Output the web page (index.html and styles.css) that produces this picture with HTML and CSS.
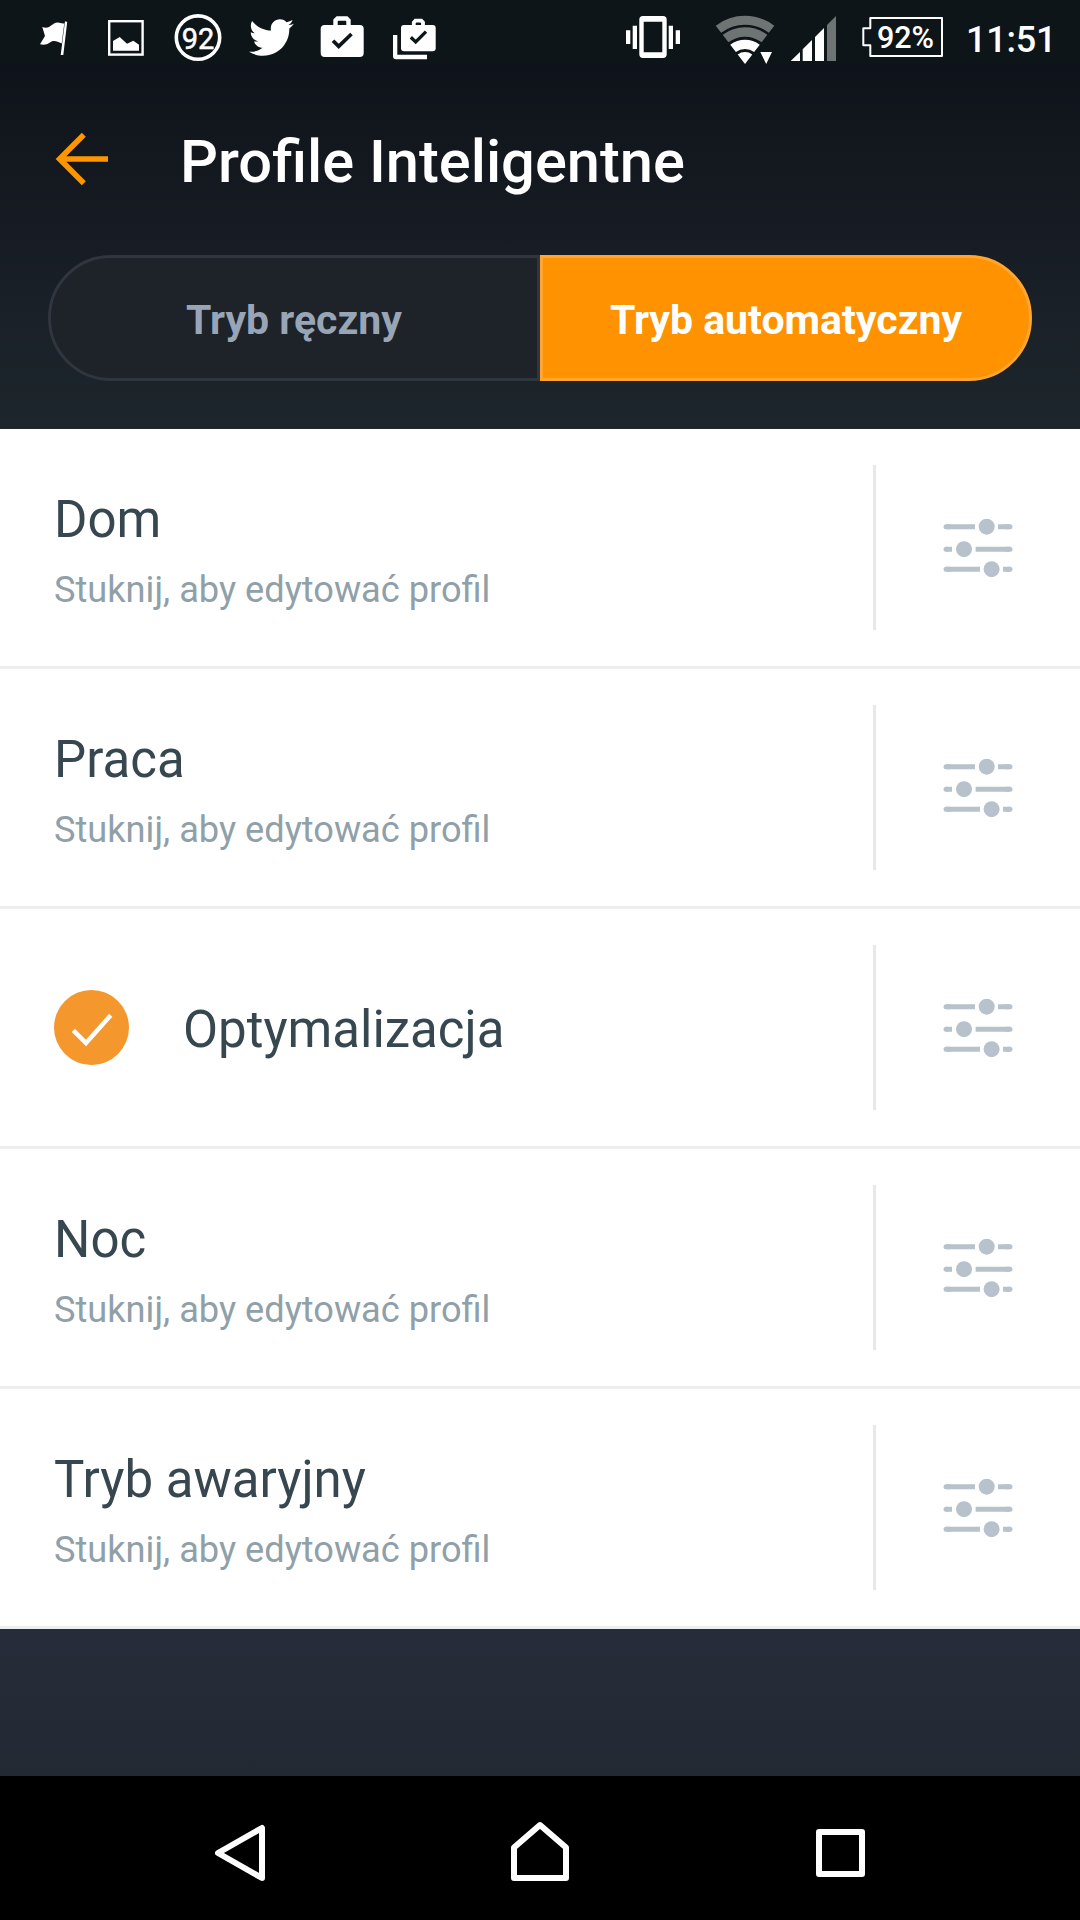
FILE: index.html
```html
<!DOCTYPE html>
<html lang="pl">
<head>
<meta charset="utf-8">
<title>Profile Inteligentne</title>
<link rel="stylesheet" href="styles.css">
</head>
<body>
<svg class="defs" aria-hidden="true">
  <symbol id="sliders" viewBox="943 517 70 61">
    <g fill="none" stroke="#b8c2cc" stroke-width="5">
      <path d="M946 526.7H975M998 526.7H1010M946 549.3H952M975.6 549.3H1010M946 569.3H980M1003 569.3H1010"/>
      <path stroke-linecap="round" d="M946 526.7h4M1006 526.7h4M946 549.3h1M1006 549.3h4M946 569.3h4M1008 569.3h2"/>
    </g>
    <g fill="#b8c2cc"><circle cx="986.7" cy="526.7" r="8"/><circle cx="964" cy="549.2" r="8"/><circle cx="991.6" cy="569.2" r="8"/></g>
  </symbol>
</svg>
<div class="screen">
  <header class="top">
    <div class="status">
      <svg width="72" height="75" viewBox="18 0 72 75" fill="#fff"><path d="M65 21.3l2.2.6L63.3 55h-2.6zM42.3 27C50 30 52 22.500 57.500 22.500c3 0 4.500 1.500 6.800.8L61.700 43.500C57 41.500 54 39.500 50 42.500c-3.500 2.300-6 2.500-10 1.800l5-8.300z"/></svg>
      <svg width="72" height="75" viewBox="90 0 72 75"><rect x="109.200" y="21.200" width="33.400" height="33.400" fill="none" stroke="#fff" stroke-width="2.400"/><path fill="#fff" d="M113 50.700V41l6.700-4 7.300 6.700 6.300-3 5.700 4v6z"/></svg>
      <svg width="72" height="75" viewBox="162 0 72 75"><circle cx="198" cy="37.600" r="21.700" fill="none" stroke="#fff" stroke-width="3.600"/><text class="badge-text" x="198" y="48.700" text-anchor="middle">92</text></svg>
      <svg width="72" height="75" viewBox="234 0 72 75" fill="#fff"><path transform="translate(249 15.100) scale(1.870)" d="M23.954 4.569c-.885.389-1.83.654-2.825.775 1.014-.611 1.794-1.574 2.163-2.723-.951.555-2.005.959-3.127 1.184-.896-.959-2.173-1.559-3.591-1.559-2.717 0-4.920 2.203-4.920 4.917 0 .39.045.765.127 1.124C7.691 8.094 4.066 6.130 1.640 3.161c-.427.722-.666 1.561-.666 2.475 0 1.710.87 3.213 2.188 4.096-.807-.026-1.566-.248-2.228-.616v.061c0 2.385 1.693 4.374 3.946 4.827-.413.111-.849.171-1.296.171-.314 0-.615-.03-.916-.086.631 1.953 2.445 3.377 4.604 3.417-1.680 1.319-3.809 2.105-6.102 2.105-.39 0-.779-.023-1.170-.067 2.189 1.394 4.768 2.209 7.557 2.209 9.054 0 13.999-7.496 13.999-13.986 0-.209 0-.42-.015-.63.961-.689 1.800-1.560 2.460-2.548z"/></svg>
      <svg width="72" height="75" viewBox="306 0 72 75"><rect x="320.700" y="25" width="43" height="32" rx="4" fill="#fff"/><path fill="none" stroke="#fff" stroke-width="4.400" d="M335.500 27V20.500L337.500 18.500H346.500L348.500 20.500V27"/><path fill="none" stroke="#0d1518" stroke-width="3.700" d="M333 40.700L338.700 46.300 351.500 34"/></svg>
      <svg width="72" height="75" viewBox="378 0 72 75"><rect x="401" y="25" width="34.700" height="26.300" rx="3" fill="#fff"/><path fill="none" stroke="#fff" stroke-width="3.800" d="M413.800 27V22.500L415.500 20.700H421.300L423 22.500V27"/><path fill="none" stroke="#0d1518" stroke-width="3.300" d="M410.800 37.300L415.700 42 426 31.700"/><path fill="#fff" d="M393 35h4.300v19.700H427v4.600H396q-3 0-3-3z"/></svg>
      <svg class="status-right" width="100" height="75" viewBox="600 0 100 75" fill="#fff"><path fill-rule="evenodd" d="M643 16h20q3.700 0 3.700 3.700V54.300q0 3.700-3.700 3.700H643q-3.700 0-3.700-3.700V19.700q0-3.700 3.700-3.700zM643.700 21.700V52.300H662.300V21.700z"/><path d="M632.700 25.700h4.300V49h-4.300zM626 30.300h4.300V44H626zM668.700 25.700h4.300V49h-4.300zM675.700 30.300h4.300V44h-4.300z"/></svg>
      <svg width="80" height="75" viewBox="700 0 80 75"><g fill="none" stroke="#6e7374"><path stroke-width="8.900" d="M718.420 29.260A43.750 43.750 0 0 1 771.580 29.260"/><path stroke-width="9.400" d="M725.560 38.590A32 32 0 0 1 764.440 38.590"/></g><path fill="none" stroke="#fff" stroke-width="9.300" d="M733.060 48.400A19.650 19.650 0 0 1 756.940 48.400"/><path fill="#fff" d="M745 64L737.700 54.500A12 12 0 0 1 752.300 54.500zM760.300 52H772L766.200 64z"/></svg>
      <svg width="70" height="75" viewBox="780 0 70 75" fill="#fff"><path d="M790.700 61L800 52V61zM802.700 61V49.300L812 40V61zM815 61V37L824 28V61z"/><path fill="#6e7374" d="M827 61V25L836 16V61z"/></svg>
      <svg width="100" height="75" viewBox="850 0 100 75"><path fill="none" stroke="#fff" stroke-width="2" stroke-linejoin="round" d="M870.300 18H942V56H870.300V45.300H863.300V28.300H870.300z"/><text class="battery-text" x="905.500" y="47.700" text-anchor="middle">92%</text></svg>
      <time class="clock">11:51</time>
    </div>
    <div class="titlebar">
      <svg class="back" width="60" height="60" viewBox="52 129 60 60" fill="none" stroke="#ff9500" stroke-width="5.600"><path d="M108 159H60M83.800 134.800L59.600 159 83.800 183.200"/></svg>
      <h1 class="title">Profile Inteligentne</h1>
    </div>
    <nav class="tabs">
      <div class="tab">Tryb ręczny</div>
      <div class="tab tab-active">Tryb automatyczny</div>
    </nav>
  </header>
  <main class="list">
    <section class="row">
      <div class="info"><div class="name">Dom</div><div class="hint">Stuknij, aby edytować profil</div></div>
      <div class="settings"><svg width="70" height="61"><use href="#sliders"/></svg></div>
    </section>
    <section class="row">
      <div class="info"><div class="name">Praca</div><div class="hint">Stuknij, aby edytować profil</div></div>
      <div class="settings"><svg width="70" height="61"><use href="#sliders"/></svg></div>
    </section>
    <section class="row">
      <div class="info info-selected">
        <svg class="check" width="75" height="75" viewBox="0 0 75 75"><circle cx="37.500" cy="37.500" r="37.500" fill="#f4972d"/><path fill="none" stroke="#fff" stroke-width="4.500" d="M19.300 40.300L32 53 56.700 25.300"/></svg>
        <div class="name">Optymalizacja</div>
      </div>
      <div class="settings"><svg width="70" height="61"><use href="#sliders"/></svg></div>
    </section>
    <section class="row">
      <div class="info"><div class="name">Noc</div><div class="hint">Stuknij, aby edytować profil</div></div>
      <div class="settings"><svg width="70" height="61"><use href="#sliders"/></svg></div>
    </section>
    <section class="row">
      <div class="info"><div class="name">Tryb awaryjny</div><div class="hint">Stuknij, aby edytować profil</div></div>
      <div class="settings"><svg width="70" height="61"><use href="#sliders"/></svg></div>
    </section>
  </main>
  <footer class="navbar">
    <svg width="300" height="144" viewBox="90 1776 300 144"><path d="M218 1853L262 1828V1878z"/></svg>
    <svg width="300" height="144" viewBox="390 1776 300 144"><path d="M514 1847.500L540 1825 566 1847.500V1878H514z"/></svg>
    <svg width="300" height="144" viewBox="690 1776 300 144"><path d="M819 1832H862V1874H819z"/></svg>
  </footer>
</div>
</body>
</html>
```

FILE: styles.css
```css
* { box-sizing: border-box; }
body { margin: 0; font-family: Roboto, "Noto Sans", sans-serif; }
svg { display: block; flex: none; }
.defs { display: none; }

.screen {
  display: flex;
  flex-direction: column;
  width: 1080px;
  height: 1920px;
  background: linear-gradient(#262c39 1629px, #222933 1776px);
}

.top {
  height: 429px;
  background: linear-gradient(#0d1518 0, #0d1518 64px, #0e131b 65px, #13171e 150px, #171c24 240px, #1a2128 320px, #1d262c 429px);
}
.status { display: flex; height: 75px; padding-left: 18px; color: #fff; }
.status-right { margin-left: 150px; }
.badge-text { font-size: 29px; fill: #fff; stroke: #fff; stroke-width: 0.5px; }
.battery-text { font-size: 30.500px; font-weight: 500; fill: #fff; }
.clock { padding-left: 16px; font-size: 36px; font-weight: 500; letter-spacing: -0.2px; line-height: 80px; }

.titlebar { display: flex; align-items: center; height: 180px; padding: 0 52px 12px; }
.title {
  margin: 5px 0 0 68px;
  color: #fff;
  font-size: 59.600px;
  font-weight: 500;
  line-height: 72px;
}

.tabs { display: flex; width: 984px; height: 126px; margin: 0 auto; }
.tab {
  flex: 1;
  padding-top: 4px;
  border: 3px solid #31353f;
  border-radius: 63px 0 0 63px;
  background: #1e2229;
  color: #97a5b6;
  font-size: 41px;
  font-weight: 700;
  line-height: 117px;
  text-align: center;
}
.tab-active { border-color: #ffa530; border-radius: 0 63px 63px 0; background: #ff9200; color: #fff; }

.list { background: #fff; }
.row { display: flex; align-items: center; height: 240px; border-bottom: 3px solid #eee; }
.row:last-child { border-color: #eaeff2; }
.info { flex: 1; height: 237px; padding: 61px 0 0 54px; }
.info-selected { display: flex; align-items: center; gap: 54px; padding-top: 0; }
.info-selected .name { padding-top: 4px; }
.name { color: #37474f; font-size: 51px; line-height: 60px; }
.hint { margin-top: 19px; color: #90a0a9; font-size: 36.200px; line-height: 42px; }
.settings {
  display: flex;
  align-items: center;
  justify-content: center;
  width: 207px;
  height: 165px;
  border-left: 3px solid #e8e8e8;
}

.navbar { display: flex; justify-content: center; height: 144px; margin-top: auto; background: #000; }
.navbar path { fill: none; stroke: #fff; stroke-width: 6px; stroke-linejoin: round; }
```
